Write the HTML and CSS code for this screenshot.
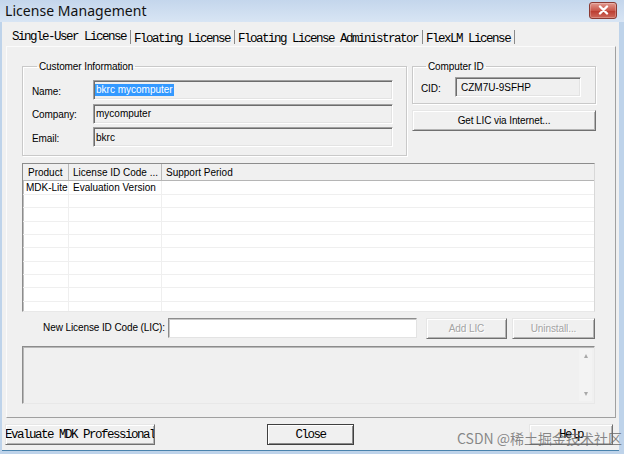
FILE: index.html
```
<!DOCTYPE html>
<html>
<head>
<meta charset="utf-8">
<title>License Management</title>
<link rel="stylesheet" href="styles.css">
</head>
<body>
<div class="window">
  <header class="titlebar">
    <span class="title">License Management</span>
    <span class="close-x"><svg width="11" height="10" viewBox="0 0 11 10"><path d="M2 1.5 L9 8.5 M9 1.5 L2 8.5" stroke="#fff" stroke-width="2.4" stroke-linecap="round"/></svg></span>
  </header>
  <div class="frame">
    <nav class="tabs">
      <span class="tab active">Single-User License</span>
      <span class="tab">Floating License</span>
      <span class="tab">Floating License Administrator</span>
      <span class="tab">FlexLM License</span>
    </nav>
    <section class="panel">
      <div class="top-row">
        <fieldset class="group customer">
          <legend>Customer Information</legend>
          <div class="form-grid">
            <span class="lbl">Name:</span><div class="field"><span class="sel">bkrc mycomputer</span></div>
            <span class="lbl">Company:</span><div class="field">mycomputer</div>
            <span class="lbl">Email:</span><div class="field">bkrc</div>
          </div>
        </fieldset>
        <div class="cid-col">
          <fieldset class="group cid">
            <legend>Computer ID</legend>
            <div class="cid-row"><span class="lbl">CID:</span><div class="field cid-field">CZM7U-9SFHP</div></div>
          </fieldset>
          <button class="btn get-lic">Get LIC via Internet...</button>
        </div>
      </div>
      <div class="listview">
        <div class="lv-head"><div class="c1">Product</div><div class="c2">License ID Code ...</div><div class="c3">Support Period</div></div>
        <div class="lv-body">
          <div class="lv-row"><div class="c1">MDK-Lite</div><div class="c2">Evaluation Version</div><div class="c3"></div></div>
          <div class="lv-row"><div class="c1"></div><div class="c2"></div><div class="c3"></div></div>
          <div class="lv-row"><div class="c1"></div><div class="c2"></div><div class="c3"></div></div>
          <div class="lv-row"><div class="c1"></div><div class="c2"></div><div class="c3"></div></div>
          <div class="lv-row"><div class="c1"></div><div class="c2"></div><div class="c3"></div></div>
          <div class="lv-row"><div class="c1"></div><div class="c2"></div><div class="c3"></div></div>
          <div class="lv-row"><div class="c1"></div><div class="c2"></div><div class="c3"></div></div>
          <div class="lv-row"><div class="c1"></div><div class="c2"></div><div class="c3"></div></div>
          <div class="lv-row"><div class="c1"></div><div class="c2"></div><div class="c3"></div></div>
          <div class="lv-row"><div class="c1"></div><div class="c2"></div><div class="c3"></div></div>
        </div>
      </div>
      <div class="lic-row">
        <span class="lic-label">New License ID Code (LIC):</span>
        <div class="lic-input"></div>
        <button class="btn disabled add-lic">Add LIC</button>
        <button class="btn disabled uninstall">Uninstall...</button>
      </div>
      <div class="msgbox">
        <div class="msg-text"></div>
        <div class="vscroll"><span class="arrow up"></span><span class="arrow down"></span></div>
      </div>
    </section>
    <footer class="footer">
      <button class="btn mono eval"><span>Evaluate MDK Professional</span></button>
      <button class="btn mono default close">Close</button>
      <button class="btn mono help">Help</button>
    </footer>
  </div>
  <div class="watermark">CSDN @稀土掘金技术社区</div>
</div>
</body>
</html>
```
FILE: styles.css
```
* { box-sizing: border-box; }
html, body { margin: 0; padding: 0; }
body {
  width: 624px;
  height: 454px;
  overflow: hidden;
  background: #f0f0f0;
  font-family: "Liberation Sans", Arial, sans-serif;
  font-size: 10px;
  color: #000;
}
.window {
  position: relative;
  width: 624px;
  height: 454px;
  display: flex;
  flex-direction: column;
  background: #bed3ea;
}
.titlebar {
  height: 22px;
  flex: none;
  display: flex;
  align-items: center;
  justify-content: space-between;
  padding: 0 7px 0 5px;
  background: linear-gradient(#c4d6ec, #d8e5f4);
}
.title {
  font-family: "Noto Sans", "Liberation Sans", sans-serif;
  font-size: 14px;
  line-height: 22px;
  color: #111;
  letter-spacing: 0.05px;
}
.close-x {
  width: 28px;
  height: 17px;
  margin-top: -2px;
  display: flex;
  align-items: center;
  justify-content: center;
  border: 1px solid #8b3a33;
  border-radius: 3px;
  background: linear-gradient(#e29a90, #c9574b 50%, #b9392e 51%, #cf6a5c);
  box-shadow: inset 0 0 0 1px rgba(255,255,255,0.25);
}
.frame {
  flex: 1;
  margin: 0 5px 3px 2px;
  border-bottom: 1px solid #4a83ad;
  background: #f0f0f0;
  display: flex;
  flex-direction: column;
}
.tabs {
  height: 24px;
  flex: none;
  display: flex;
  align-items: flex-start;
  padding: 8px 0 0 6px;
  font-family: "Liberation Mono", "Courier New", monospace;
  font-size: 12.5px;
  letter-spacing: -1.5px;
}
.tab {
  height: 14px;
  line-height: 18px;
  padding: 0 4px 0 3px;
  border-right: 1px solid #8a8a8a;
  white-space: nowrap;
}
.tab.active {
  padding: 0 4px 0 4px;
  line-height: 14px;
}
.panel {
  flex: none;
  margin: 0 3px 0 4px;
  border: 1px solid;
  border-color: #fbfbfb #a0a0a0 #a0a0a0 #fbfbfb;
  padding: 13px 18px 13px 15px;
  display: flex;
  flex-direction: column;
}
.top-row {
  display: flex;
  align-items: flex-start;
}
.group {
  margin: 0;
  min-width: 0;
  border: 1px solid #c9c9c9;
  box-shadow: inset 1px 1px 0 #fff, 1px 1px 0 #fff;
}
.group legend {
  padding: 0 2px;
  margin-left: 5px;
  line-height: 13px;
  height: 12px;
  letter-spacing: -0.1px;
}
.customer {
  width: 385px;
  padding: 8px 14px 8px 9px;
}
.form-grid {
  display: grid;
  grid-template-columns: 61px 300px;
  grid-auto-rows: 20px;
  row-gap: 3.5px;
  align-items: center;
}
.lbl { letter-spacing: -0.1px; padding-top: 2px; }
.field {
  height: 20px;
  border: 1px solid;
  border-color: #a0a0a0 #fff #fff #a0a0a0;
  box-shadow: inset 1px 1px 0 #6d6d6d, inset -1px -1px 0 #e3e3e3;
  background: #f0f0f0;
  padding: 0 0 0 2px;
  display: flex;
  align-items: center;
  white-space: nowrap;
}
.sel {
  background: #3399ff;
  color: #fff;
  line-height: 12px;
  padding: 0 1px;
  margin-left: -1px;
}
.cid-col {
  width: 184px;
  margin-left: 5px;
  display: flex;
  flex-direction: column;
}
.cid {
  width: 184px;
  padding: 5px 16px 6px 8px;
}
.cid-row {
  display: grid;
  grid-template-columns: 34px 126px;
  align-items: center;
}
.cid-field { padding-left: 5px; }
.btn {
  font-family: "Liberation Sans", Arial, sans-serif;
  font-size: 10px;
  color: #000;
  margin: 0;
  padding: 0;
  height: 21px;
  border: 1px solid;
  border-color: #e6e6e6 #707070 #707070 #e6e6e6;
  box-shadow: inset 1px 1px 0 #fff, inset -1px -1px 0 #b4b4b4;
  background: #f0f0f0;
  display: flex;
  align-items: center;
  justify-content: center;
  white-space: nowrap;
  overflow: hidden;
}
.get-lic { margin-top: 6px; width: 184px; letter-spacing: -0.1px; }
.listview {
  margin-top: 7px;
  width: 573px;
  height: 149px;
  border: 1px solid;
  border-color: #8c8c8c #d8d8d8 #e8e8e8 #8c8c8c;
  box-shadow: inset 1px 1px 0 #bdbdbd;
  background: #fff;
  overflow: hidden;
  display: flex;
  flex-direction: column;
}
.lv-head {
  height: 17px;
  flex: none;
  display: flex;
  background: #f0f0f0;
  border-bottom: 1px solid #b5b5b5;
}
.lv-head > div {
  line-height: 17px;
  padding-left: 4px;
  border-right: 1px solid #b9b9b9;
  white-space: nowrap;
  overflow: hidden;
}
.c1 { width: 46px; flex: none; }
.c2 { width: 93px; flex: none; }
.c3 { flex: 1; }
.lv-head .c1 { padding-left: 5px; }
.lv-head .c3 { border-right: none; }
.lv-body {
  flex: 1;
  overflow: hidden;
}
.lv-row {
  display: flex;
  height: 13.34px;
  border-bottom: 1px solid #efefef;
}
.lv-row:first-child { height: 14px; }
.lv-row > div {
  border-right: 1px solid #efefef;
  line-height: 14px;
  padding-left: 4px;
  white-space: nowrap;
}
.lv-row .c1 { padding-left: 3px; }
.lv-row .c3 { border-right: none; }
.lic-row {
  margin-top: 6px;
  display: flex;
  align-items: flex-start;
}
.lic-label {
  width: 143px;
  text-align: right;
  margin-right: 3px;
  line-height: 20px;
  letter-spacing: -0.1px;
  white-space: nowrap;
}
.lic-input {
  width: 249px;
  height: 20px;
  background: #fff;
  border: 1px solid;
  border-color: #8c8c8c #e3e3e3 #e3e3e3 #8c8c8c;
  box-shadow: inset 1px 1px 0 #c8c8c8;
}
.btn.disabled {
  color: #a3a3a3;
  text-shadow: 1px 1px 0 #fff;
  letter-spacing: -0.1px;
}
.add-lic { width: 81px; margin-left: 9px; }
.uninstall { width: 83px; margin-left: 5px; }
.msgbox {
  margin-top: 7px;
  width: 573px;
  height: 58px;
  border: 1px solid;
  border-color: #8c8c8c #e8e8e8 #e8e8e8 #8c8c8c;
  box-shadow: inset 1px 1px 0 #b8b8b8;
  background: #f0f0f0;
  display: flex;
  padding: 2px 2px 2px 2px;
}
.msg-text { flex: 1; }
.vscroll {
  width: 13px;
  display: flex;
  flex-direction: column;
  justify-content: space-between;
  align-items: center;
  padding: 5px 0 5px;
  background: #f3f3f3;
}
.arrow {
  width: 0;
  height: 0;
  border-left: 2.5px solid transparent;
  border-right: 2.5px solid transparent;
}
.arrow.up { border-bottom: 4px solid #a8a8a8; }
.arrow.down { border-top: 4px solid #a8a8a8; }
.footer {
  margin-top: 6px;
  display: flex;
  align-items: flex-start;
}
.btn.mono {
  font-family: "Liberation Mono", "Courier New", monospace;
  font-size: 12.5px;
  letter-spacing: -1.5px;
}
.eval { width: 150px; margin-left: 3px; }
.eval span { flex: none; }
.close { width: 87px; margin-left: 112px; }
.default {
  border-color: #404040;
  box-shadow: inset 1px 1px 0 #fff, inset -1px -1px 0 #8a8a8a;
}
.help { width: 84px; margin-left: 175px; }
.watermark {
  position: absolute;
  left: 457px;
  top: 429px;
  font-family: "Noto Sans CJK SC", "Noto Sans", sans-serif;
  font-size: 14px;
  line-height: 18px;
  color: rgba(105, 105, 105, 0.78);
  white-space: nowrap;
  pointer-events: none;
}
```
